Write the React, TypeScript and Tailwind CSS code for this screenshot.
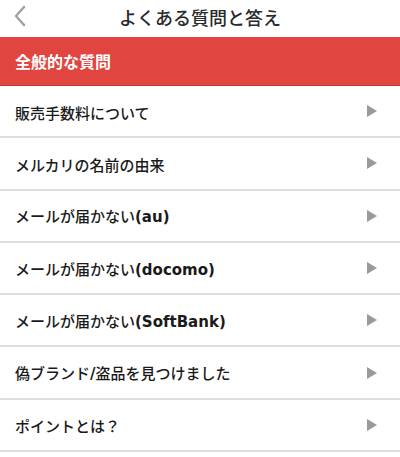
import { JSX } from "react";

// FAQ entries: text parts, latin parts rendered bold
const items: { ja: string; latin?: string; tail?: string }[] = [
  { ja: "販売手数料について" },
  { ja: "メルカリの名前の由来" },
  { ja: "メールが届かない", latin: "(au)" },
  { ja: "メールが届かない", latin: "(docomo)" },
  { ja: "メールが届かない", latin: "(SoftBank)" },
  { ja: "偽ブランド", latin: "/", tail: "盗品を見つけました" },
  { ja: "ポイントとは？" },
];

const jaFont = "font-['Noto_Sans_CJK_JP',sans-serif]";

function Arrow(): JSX.Element {
  return (
    <svg width="10" height="12" viewBox="0 0 10 12" className="shrink-0">
      <polygon points="0,0 10,6 0,12" fill="#9a9a9a" />
    </svg>
  );
}

export default function App(): JSX.Element {
  return (
    <div className={`w-[400px] h-[457px] overflow-hidden bg-white ${jaFont}`}>
      {/* Header */}
      <div className="relative h-[37px] flex items-center justify-center">
        <svg
          width="14"
          height="22"
          viewBox="0 0 14 22"
          className="absolute left-[13px] top-[5px]"
        >
          <polyline
            points="11,2 3,11 11,20"
            fill="none"
            stroke="#a3a3a3"
            strokeWidth="2.6"
            strokeLinecap="round"
            strokeLinejoin="round"
          />
        </svg>
        <h1 className="text-[18px] text-[#2a2a2a] font-medium leading-none -mt-[3px]">
          よくある質問と答え
        </h1>
      </div>

      {/* Section header */}
      <div className="h-[49px] bg-[#e0463f] border-b border-[#c9322c] flex items-center px-[15px]">
        <span className="text-white text-[16px] font-bold">全般的な質問</span>
      </div>

      {/* Rows */}
      <ul>
        {items.map((item, i) => (
          <li
            key={i}
            className="h-[52.3px] border-b-[2.5px] border-[#dedede] flex items-center justify-between pl-[15px] pr-[23px]"
          >
            <span className="text-[15px] text-[#1a1a1a] font-medium leading-none pt-[2px]">
              {item.ja}
              {item.latin && (
                <span className="font-['DejaVu_Sans',sans-serif] font-bold text-[15px]">
                  {item.latin}
                </span>
              )}
              {item.tail}
            </span>
            <Arrow />
          </li>
        ))}
      </ul>
    </div>
  );
}
